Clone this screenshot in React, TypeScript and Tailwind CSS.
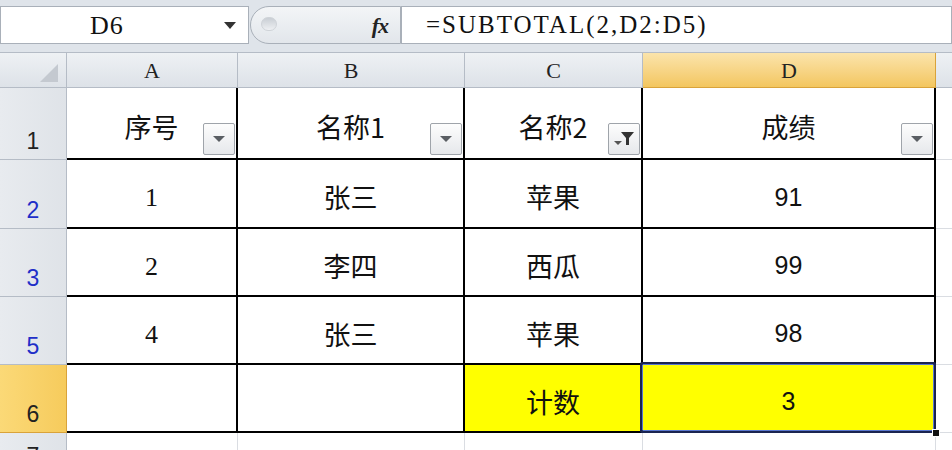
import React from "react";

const cjk = { fontFamily: '"Noto Sans CJK SC", "Noto Sans", sans-serif' };
const serif = { fontFamily: '"Liberation Serif", "DejaVu Serif", serif' };
const sans = { fontFamily: '"Liberation Sans", Arial, sans-serif' };

function FilterBtn({ funnel }: { funnel?: boolean }) {
  return (
    <div className="absolute right-[1px] bottom-[3px] w-[32px] h-[32px] border border-[#9fa4aa] rounded-[2px] bg-gradient-to-b from-[#fdfdfd] to-[#e6e8eb] flex items-center justify-center">
      {funnel ? (
        <svg width="24" height="20" viewBox="0 0 24 20">
          <polygon points="2,12 10,12 6,16" fill="#555" />
          <polygon points="9,3 22,3 17,9 17,16 14,16 14,9" fill="#333" />
        </svg>
      ) : (
        <svg width="14" height="10" viewBox="0 0 14 10">
          <polygon points="1,2 13,2 7,8" fill="#5a5e63" />
        </svg>
      )}
    </div>
  );
}

const dataCell = "relative border-r-2 border-b-2 border-black bg-white flex items-center justify-center pt-[8px]";
const rowHead = "border-r border-b border-[#b5bcc6] bg-gradient-to-r from-[#e8ebef] to-[#dfe3e8] flex items-end justify-center pb-[1px] text-[23px]";
const colHead = "border-r border-b border-[#b5bcc6] bg-gradient-to-b from-[#eef1f4] to-[#dde2e8] flex items-center justify-center text-[22px] text-[#222]";

export default function App() {
  const rows = [
    { n: "2", a: "1", b: "张三", c: "苹果", d: "91" },
    { n: "3", a: "2", b: "李四", c: "西瓜", d: "99" },
    { n: "5", a: "4", b: "张三", c: "苹果", d: "98" },
  ];
  return (
    <div className="w-[952px] h-[450px] overflow-hidden bg-white flex flex-col">
      <div className="h-[6px] bg-[#dfe4ea] shrink-0" />
      <div className="h-[38px] flex shrink-0 bg-[#dfe4ea]">
        <div className="w-[249px] bg-white border border-[#a9b0b9] flex items-center relative">
          <span className="pl-[89px] text-[26px] tracking-[1px] text-[#111]" style={serif}>D6</span>
          <svg className="absolute left-[222px] top-[14px]" width="14" height="10" viewBox="0 0 14 10">
            <polygon points="1,1 13,1 7,8" fill="#333" />
          </svg>
        </div>
        <div className="w-[151px] ml-[1px] rounded-l-[19px] border border-[#a9b0b9] bg-gradient-to-b from-[#f3f5f7] to-[#e2e6eb] relative flex items-center justify-end pr-[12px]">
          <div className="absolute left-[10px] top-[10px] w-[16px] h-[14px] rounded-full bg-gradient-to-b from-[#c9ced4] to-[#eef0f3] border border-[#cfd3d8]" />
          <span className="text-[22px] italic font-bold text-[#222] tracking-[-1px]" style={serif}>fx</span>
        </div>
        <div className="flex-1 bg-white border border-l-[#a9b0b9] border-[#a9b0b9] flex items-center pl-[24px]">
          <span className="text-[25px] tracking-[2px] text-[#111]" style={serif}>=SUBTOTAL(2,D2:D5)</span>
        </div>
      </div>
      <div className="h-[9px] bg-[#dfe4ea] shrink-0 border-b border-[#b5bcc6]" />
      <div className="flex-1 grid grid-cols-[67px_171px_227px_178px_293px_1fr] grid-rows-[35px_72px_69px_68px_68px_68px_1fr]">
        <div className="border-r border-b border-[#b5bcc6] bg-gradient-to-b from-[#eef1f4] to-[#dde2e8] relative">
          <svg className="absolute right-[8px] bottom-[5px]" width="18" height="18" viewBox="0 0 18 18">
            <polygon points="18,0 18,18 0,18" fill="#c4c9d0" />
          </svg>
        </div>
        <div className={colHead} style={serif}>A</div>
        <div className={colHead} style={serif}>B</div>
        <div className={colHead} style={serif}>C</div>
        <div className="border-r border-b border-[#d9a33a] bg-gradient-to-b from-[#fbe4ab] to-[#f3c65e] flex items-center justify-center text-[22px] text-[#222]" style={serif}>D</div>
        <div className="border-b border-[#b5bcc6] bg-gradient-to-b from-[#eef1f4] to-[#dde2e8]" />

        <div className={rowHead + " text-[#222]"} style={sans}>1</div>
        <div className={dataCell + " text-[27px] text-[#111]"} style={cjk}>序号<FilterBtn /></div>
        <div className={dataCell + " text-[27px] text-[#111]"} style={cjk}>名称1<FilterBtn /></div>
        <div className={dataCell + " text-[27px] text-[#111]"} style={cjk}>名称2<FilterBtn funnel /></div>
        <div className={dataCell + " text-[27px] text-[#111]"} style={cjk}>成绩<FilterBtn /></div>
        <div className="border-b border-[#dadde2] bg-white" />

        {rows.map((r) => (
          <React.Fragment key={r.n}>
            <div className={rowHead + " text-[#1f2fc8]"} style={sans}>{r.n}</div>
            <div className={dataCell + " text-[26px] text-[#111]"} style={serif}>{r.a}</div>
            <div className={dataCell + " text-[27px] text-[#111]"} style={cjk}>{r.b}</div>
            <div className={dataCell + " text-[27px] text-[#111]"} style={cjk}>{r.c}</div>
            <div className={dataCell + " text-[25px] text-[#111]"} style={sans}>{r.d}</div>
            <div className="border-b border-[#dadde2] bg-white" />
          </React.Fragment>
        ))}

        <div className="border-r border-b border-[#d9a33a] bg-gradient-to-r from-[#fbd977] to-[#f6cb5c] flex items-end justify-center pb-[1px] text-[23px] text-[#222]" style={sans}>6</div>
        <div className={dataCell} />
        <div className={dataCell} />
        <div className={dataCell.replace("bg-white", "bg-[#ffff00]") + " text-[27px] text-[#111]"} style={cjk}>计数</div>
        <div className={dataCell.replace("bg-white", "bg-[#ffff00]") + " text-[25px] text-[#111]"} style={sans}>
          3
          <div className="absolute -left-[3px] -top-[3px] right-[-2px] bottom-[-2px] border-2 border-[#1b2450] rounded-[2px]">
            <div className="absolute inset-0 border border-[#5a78d0] rounded-[1px]" />
          </div>
          <div className="absolute right-[-6px] bottom-[-6px] w-[8px] h-[8px] bg-[#111] border border-white" />
        </div>
        <div className="border-b border-[#dadde2] bg-white" />

        <div className="border-r border-[#b5bcc6] bg-gradient-to-r from-[#e8ebef] to-[#dfe3e8] flex items-start justify-center pt-[6px] text-[23px] text-[#222]" style={sans}>7</div>
        <div className="border-r border-[#dadde2] bg-white" />
        <div className="border-r border-[#dadde2] bg-white" />
        <div className="border-r border-[#dadde2] bg-white" />
        <div className="border-r border-[#dadde2] bg-white" />
        <div className="bg-white" />
      </div>
    </div>
  );
}
